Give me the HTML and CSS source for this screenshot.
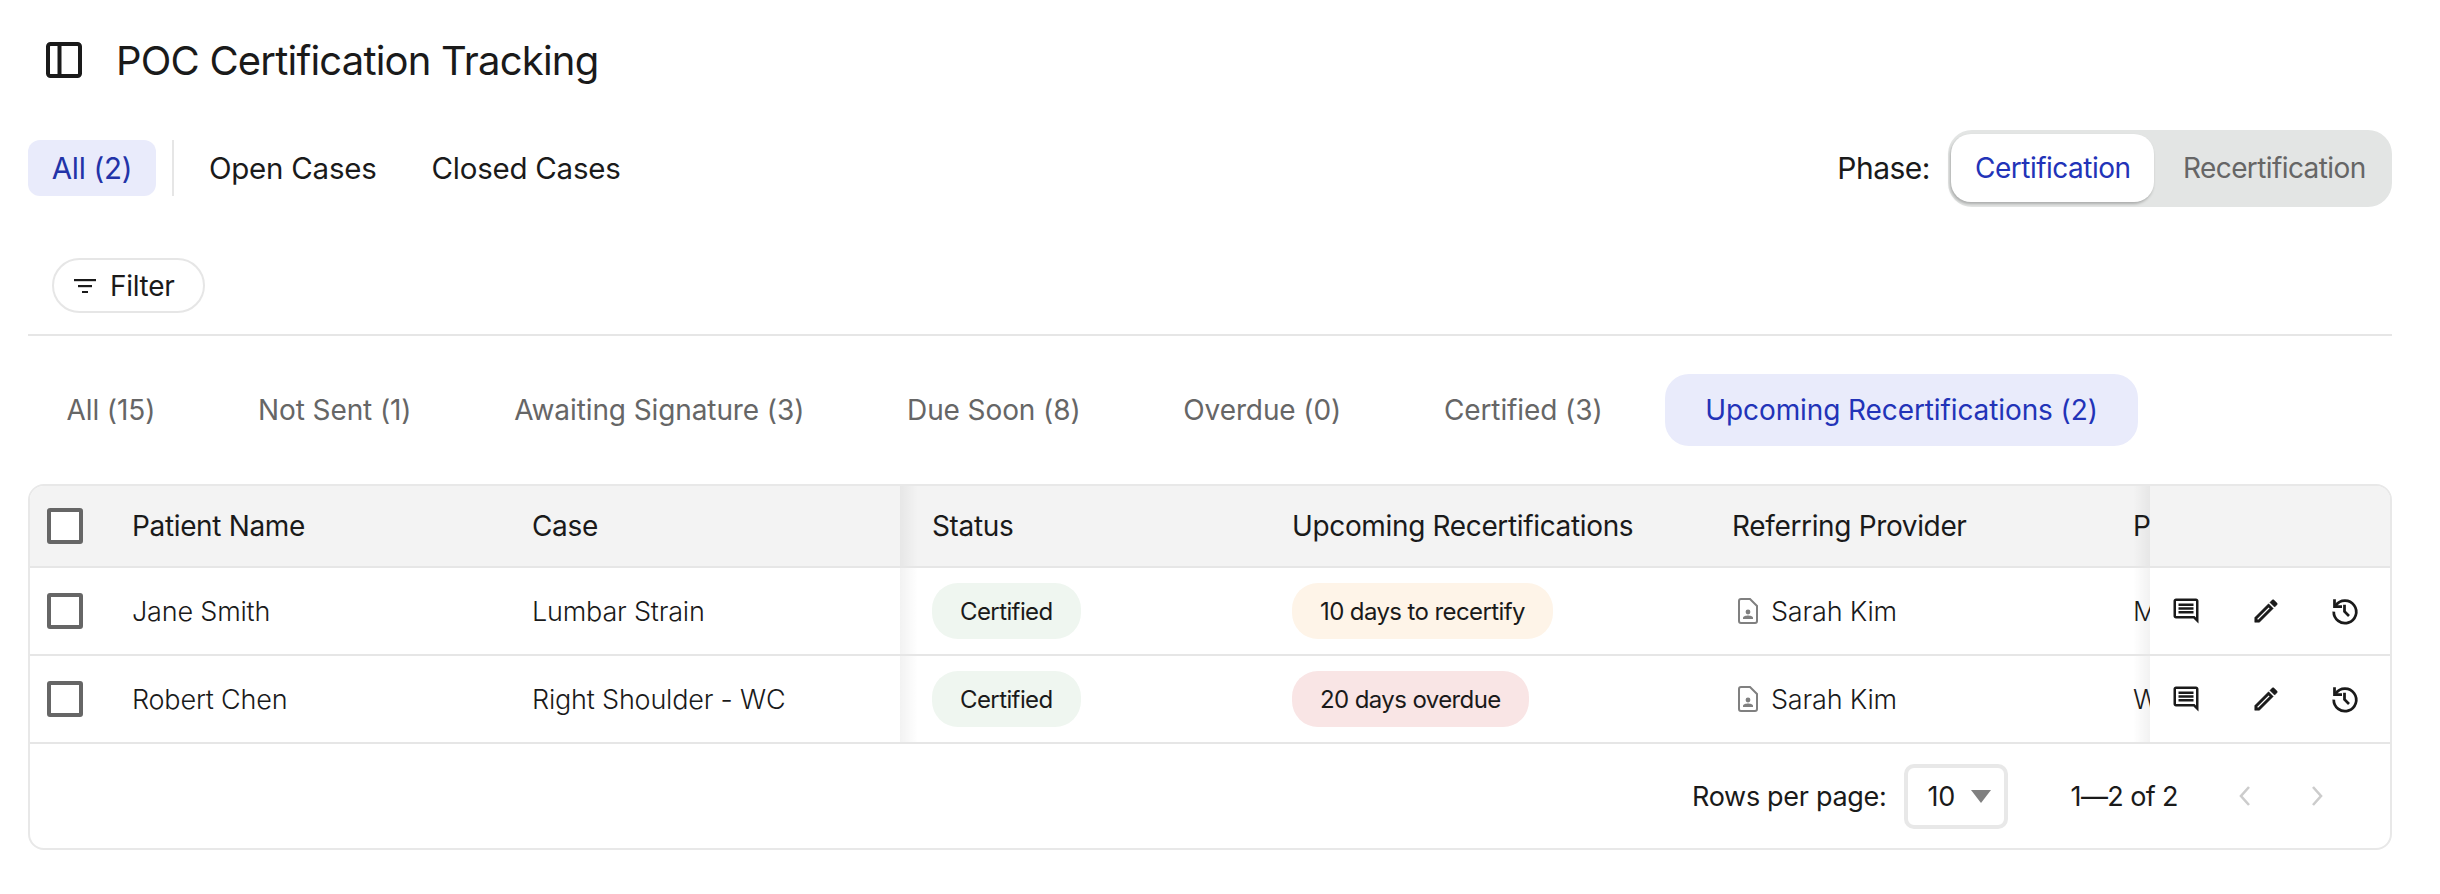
FILE: index.html
```html
<!DOCTYPE html>
<html lang="en">
<head>
<meta charset="utf-8">
<title>POC Certification Tracking</title>
<link rel="stylesheet" href="styles.css">
</head>
<body>
<main class="page">
  <header class="title-bar">
    <svg class="panel-icon" viewBox="0 0 36 36" fill="none" stroke="currentColor" stroke-width="4"><rect x="2" y="2" width="32" height="32" rx="2.5"/><path d="M13.5 2v32"/></svg>
    <h1 class="title">POC Certification Tracking</h1>
  </header>
  <section class="case-bar">
    <div class="case-tabs">
      <a class="case-tab case-active">All (2)</a>
      <span class="case-divider"></span>
      <a class="case-tab">Open Cases</a>
      <a class="case-tab">Closed Cases</a>
    </div>
    <div class="phase">
      <span class="phase-label">Phase:</span>
      <div class="phase-toggle">
        <span class="phase-opt phase-on">Certification</span>
        <span class="phase-opt">Recertification</span>
      </div>
    </div>
  </section>
  <section class="filter-bar">
    <button class="filter-btn">
      <svg class="filter-icon" viewBox="0 0 22 14" fill="currentColor"><rect x="0" y="0" width="22" height="2.2"/><rect x="4" y="6" width="14" height="2.2"/><rect x="8" y="12" width="6" height="2.2"/></svg>
      Filter
    </button>
  </section>
  <nav class="status-tabs">
    <a class="status-tab">All (15)</a>
    <a class="status-tab">Not Sent (1)</a>
    <a class="status-tab">Awaiting Signature (3)</a>
    <a class="status-tab">Due Soon (8)</a>
    <a class="status-tab">Overdue (0)</a>
    <a class="status-tab">Certified (3)</a>
    <a class="status-tab status-active">Upcoming Recertifications (2)</a>
  </nav>
  <section class="table-card">
    <div class="table-scroll">
      <div class="row head">
        <div class="cell c-check"><span class="check"></span></div>
        <div class="cell">Patient Name</div>
        <div class="cell c-case">Case</div>
        <div class="cell c-status">Status</div>
        <div class="cell">Upcoming Recertifications</div>
        <div class="cell">Referring Provider</div>
        <div class="cell c-phys">Physician</div>
        <div class="cell c-actions"></div>
      </div>
      <div class="row">
        <div class="cell c-check"><span class="check"></span></div>
        <div class="cell">Jane Smith</div>
        <div class="cell c-case">Lumbar Strain</div>
        <div class="cell c-status"><span class="pill pill-green">Certified</span></div>
        <div class="cell"><span class="pill pill-amber">10 days to recertify</span></div>
        <div class="cell"><svg class="doc-icon" viewBox="0 0 20 26" fill="none"><path d="M1 3a2 2 0 0 1 2-2h9l7 7v15a2 2 0 0 1-2 2H3a2 2 0 0 1-2-2z" stroke="currentColor" stroke-width="2"/><circle cx="10" cy="14" r="2.4" fill="currentColor"/><path d="M5 21v-1.2c0-1.4 3-2.3 5-2.3s5 .9 5 2.3V21z" fill="currentColor"/></svg>Sarah Kim</div>
        <div class="cell c-phys">Mark Lee</div>
        <div class="cell c-actions">
          <svg class="act" viewBox="0 0 24 24" fill="currentColor"><path d="M21.99 4c0-1.1-.89-2-1.99-2H4c-1.1 0-2 .9-2 2v12c0 1.1.9 2 2 2h14l4 4-.01-18zM20 4v13.17L18.83 16H4V4h16zM6 12h12v2H6zm0-3h12v2H6zm0-3h12v2H6z"/></svg>
          <svg class="act" viewBox="0 0 24 24" fill="currentColor" stroke="currentColor" stroke-width="0.4"><path d="M14.06 9.02l.92.92L5.92 19H5v-.92l9.06-9.06M17.66 3c-.25 0-.51.1-.7.29l-1.83 1.83 3.75 3.75 1.83-1.83c.39-.39.39-1.02 0-1.41l-2.34-2.34c-.2-.2-.45-.29-.71-.29zm-3.6 3.19L3 17.25V21h3.75L17.81 9.94l-3.75-3.75z"/></svg>
          <svg class="act" viewBox="0 0 24 24" fill="none" stroke="currentColor" stroke-width="2.2"><path d="M4.6 7.6A9 9 0 1 1 3 12.5"/><path d="M9.6 8.4H3.6V2.6"/><path d="M11.6 7v5.4l3.6 3.6"/></svg>
        </div>
      </div>
      <div class="row">
        <div class="cell c-check"><span class="check"></span></div>
        <div class="cell">Robert Chen</div>
        <div class="cell c-case">Right Shoulder - WC</div>
        <div class="cell c-status"><span class="pill pill-green">Certified</span></div>
        <div class="cell"><span class="pill pill-red">20 days overdue</span></div>
        <div class="cell"><svg class="doc-icon" viewBox="0 0 20 26" fill="none"><path d="M1 3a2 2 0 0 1 2-2h9l7 7v15a2 2 0 0 1-2 2H3a2 2 0 0 1-2-2z" stroke="currentColor" stroke-width="2"/><circle cx="10" cy="14" r="2.4" fill="currentColor"/><path d="M5 21v-1.2c0-1.4 3-2.3 5-2.3s5 .9 5 2.3V21z" fill="currentColor"/></svg>Sarah Kim</div>
        <div class="cell c-phys">Wei Park</div>
        <div class="cell c-actions">
          <svg class="act" viewBox="0 0 24 24" fill="currentColor"><path d="M21.99 4c0-1.1-.89-2-1.99-2H4c-1.1 0-2 .9-2 2v12c0 1.1.9 2 2 2h14l4 4-.01-18zM20 4v13.17L18.83 16H4V4h16zM6 12h12v2H6zm0-3h12v2H6zm0-3h12v2H6z"/></svg>
          <svg class="act" viewBox="0 0 24 24" fill="currentColor" stroke="currentColor" stroke-width="0.4"><path d="M14.06 9.02l.92.92L5.92 19H5v-.92l9.06-9.06M17.66 3c-.25 0-.51.1-.7.29l-1.83 1.83 3.75 3.75 1.83-1.83c.39-.39.39-1.02 0-1.41l-2.34-2.34c-.2-.2-.45-.29-.71-.29zm-3.6 3.19L3 17.25V21h3.75L17.81 9.94l-3.75-3.75z"/></svg>
          <svg class="act" viewBox="0 0 24 24" fill="none" stroke="currentColor" stroke-width="2.2"><path d="M4.6 7.6A9 9 0 1 1 3 12.5"/><path d="M9.6 8.4H3.6V2.6"/><path d="M11.6 7v5.4l3.6 3.6"/></svg>
        </div>
      </div>
    </div>
    <footer class="pager">
      <span class="pager-label">Rows per page:</span>
      <span class="pager-select">10<i class="caret"></i></span>
      <span class="pager-range">1—2 of 2</span>
      <svg class="chev" viewBox="0 0 14 24" fill="none" stroke="currentColor" stroke-width="2.6"><path d="M11 3 3 12l8 9"/></svg>
      <svg class="chev" viewBox="0 0 14 24" fill="none" stroke="currentColor" stroke-width="2.6"><path d="m3 3 8 9-8 9"/></svg>
    </footer>
  </section>
</main>
</body>
</html>
```
FILE: styles.css
```css
* { box-sizing: border-box; }
html, body { margin: 0; background: #fff; }
body { font-family: Inter, "Noto Sans", sans-serif; color: #1a1a1a; font-size: 28px; letter-spacing: -0.5px; overflow: hidden; }
.page { padding: 0 48px 0 28px; width: 2440px; height: 894px; }
.title-bar { display: flex; align-items: center; height: 120px; padding-left: 18px; gap: 34px; }
.panel-icon { width: 36px; height: 36px; flex: none; color: #1a1a1a; }
.title { margin: 0; font-size: 40px; font-weight: 400; letter-spacing: -0.8px; }
.case-bar { display: flex; justify-content: space-between; align-items: center; height: 92px; margin-top: 2px; }
.case-tabs { display: flex; align-items: center; font-size: 29.5px; font-weight: 370; letter-spacing: -0.25px; }
.case-tab { display: flex; align-items: center; height: 56px; }
.case-active { width: 128px; justify-content: center; border-radius: 12px; background: #e9ebfb; color: #2233a8; }
.case-divider { width: 2px; height: 56px; background: #e6e6e6; margin: 0 35px 0 16px; }
.case-tab + .case-tab { margin-left: 55px; }
.phase { display: flex; align-items: center; gap: 18px; }
.phase-label { font-size: 30px; font-weight: 370; }
.phase-toggle { display: flex; align-items: center; width: 444px; height: 77px; padding: 4px 3px; border-radius: 24px; background: #e3e5e4; }
.phase-opt { display: flex; align-items: center; padding: 0 30px 0 24px; height: 68px; color: #666; letter-spacing: -0.6px; }
.phase-on { width: 203px; margin-right: 5px; background: #fff; color: #2233b8; border-radius: 20px; box-shadow: -1px 2px 3px rgba(0,0,0,.25); letter-spacing: -0.5px; }
.filter-bar { height: 116px; padding: 38px 0 0 24px; border-bottom: 2px solid #e6e6e6; margin-top: 6px; }
.filter-btn { display: flex; align-items: center; gap: 14px; width: 153px; height: 55px; padding: 0 0 0 20px; border: 2px solid #e6e6e6; border-radius: 28px; background: #fff; font: inherit; letter-spacing: -0.3px; color: inherit; }
.filter-icon { width: 22px; height: 14px; flex: none; }
.status-tabs { display: flex; gap: 22.75px; margin-top: 38px; margin-left: -1.5px; height: 72px; letter-spacing: -0.1px; }
.status-tab { display: flex; align-items: center; padding: 0 40px; color: #666; border-radius: 24px; }
.status-active { background: #e9ebfb; color: #2233b8; }
.table-card { margin-top: 38px; height: 366px; border: 2px solid #e8e8e8; border-radius: 16px; overflow: hidden; }
.table-scroll { overflow: hidden; }
.row { display: grid; grid-template-columns: 102px 400px 368px 392px 440px 401px 300px 240px; width: 2643px; height: 88px; font-size: 27px; font-weight: 350; letter-spacing: -0.2px; }
.row.head { height: 82px; font-size: 28px; font-weight: 400; letter-spacing: -0.35px; }
.cell { position: relative; display: flex; align-items: center; height: 100%; border-bottom: 2px solid #e6e6e6; background: #fff; white-space: nowrap; }
.head .cell { background: #f3f3f3; }
.c-check { padding-left: 17px; }
.check { width: 36px; height: 36px; border: 4px solid #666; border-radius: 3px; background: #fff; }
.c-status { padding-left: 32px; }
.c-case::after { content: ""; position: absolute; left: 100%; top: 0; bottom: 0; width: 18px; background: linear-gradient(90deg, rgba(0,0,0,.05), rgba(0,0,0,0)); z-index: 1; }
.row .c-phys, .head .c-phys { background-image: linear-gradient(90deg, rgba(0,0,0,0), rgba(0,0,0,.05)); background-size: 17px 100%; background-repeat: no-repeat; }
.c-actions { position: sticky; right: 0; justify-content: space-between; padding: 0 30px 0 21px; z-index: 2; }
.act { width: 30px; height: 30px; color: #1a1a1a; flex: none; }
.doc-icon { width: 20px; height: 26px; margin: 0 13px 0 6px; color: #808080; flex: none; }
.pill { display: inline-flex; align-items: center; height: 56px; padding: 0 28px; border-radius: 26px; font-size: 24px; font-weight: 400; letter-spacing: -0.6px; }
.pill-green { background: #eff6f0; }
.pill-amber { background: #fef4e8; }
.pill-red { background: #f9e5e5; }
.pager { display: flex; align-items: center; height: 104px; padding-right: 66px; justify-content: flex-end; font-size: 27px; font-weight: 370; letter-spacing: -0.3px; }
.pager-select { display: flex; align-items: center; width: 104px; height: 65px; margin-left: 17px; padding-left: 20px; border: 4px solid #e8e8e8; border-radius: 10px; }
.caret { width: 0; height: 0; margin-left: 16px; border: solid transparent; border-width: 13px 10.5px 0; border-top-color: #808080; }
.pager-range { margin: 0 60px 0 63px; letter-spacing: -0.6px; }
.chev { width: 14px; height: 24px; color: #ccc; }
.chev + .chev { margin-left: 58px; }
```
